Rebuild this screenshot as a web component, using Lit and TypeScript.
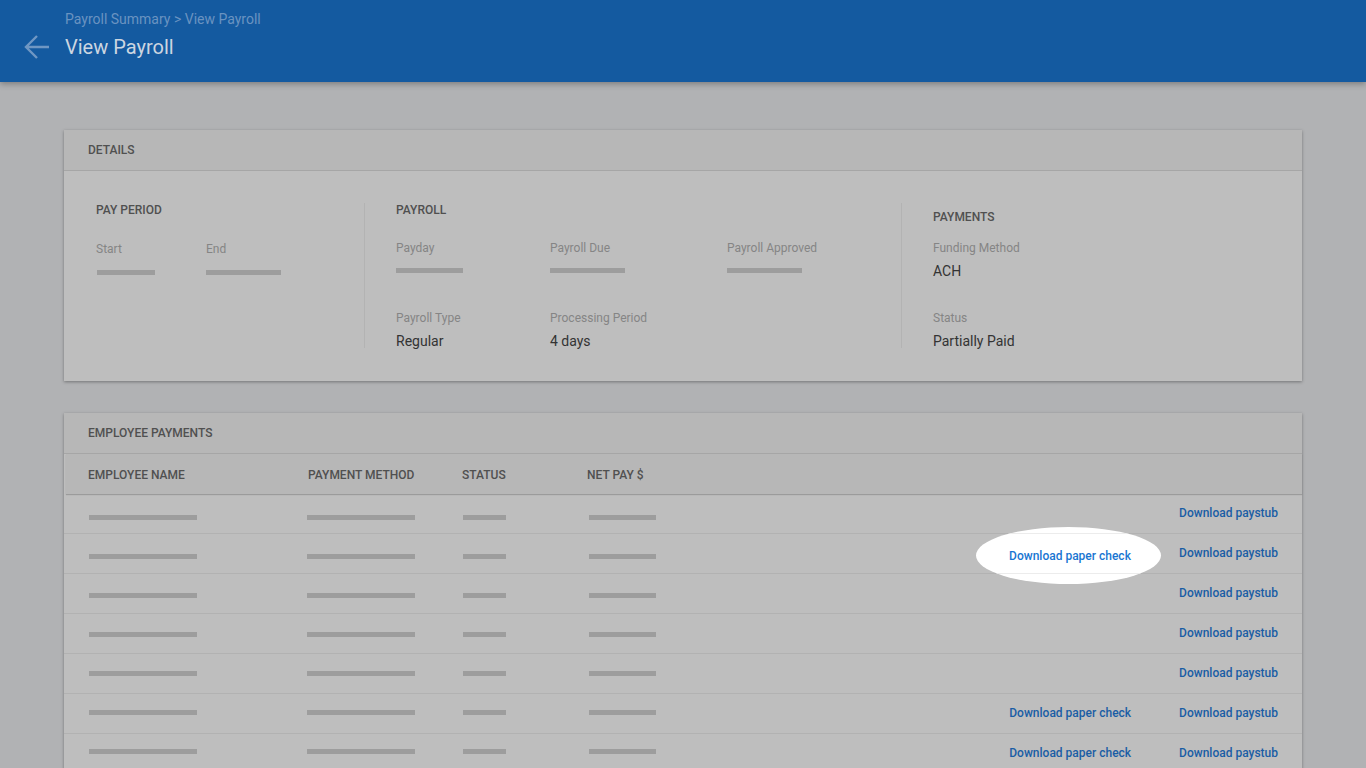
import { LitElement, html, css, nothing } from 'lit'
import { customElement } from 'lit/decorators.js'

const ROWS = [
  { paperCheck: false, spotlight: false },
  { paperCheck: false, spotlight: true },
  { paperCheck: false, spotlight: false },
  { paperCheck: false, spotlight: false },
  { paperCheck: false, spotlight: false },
  { paperCheck: true, spotlight: false },
  { paperCheck: true, spotlight: false },
]

const PAY_COLS = [
  { cls: 'c-name', bar: 108 },
  { cls: 'c-method', bar: 108 },
  { cls: 'c-status', bar: 43 },
  { cls: 'c-net', bar: 67 },
]

@customElement('app-root')
export class AppRoot extends LitElement {
  static styles = css`
    :host {
      display: block;
      height: 768px;
      overflow: hidden;
      background: #b1b2b4;
      font-family: Roboto, "Liberation Sans", sans-serif;
      font-size: 12px;
      color: #505050;
    }
    .topbar {
      height: 82px;
      box-sizing: border-box;
      background: #145aa0;
      box-shadow: 0 2px 6px rgba(0, 0, 0, 0.3);
      padding: 11px 0 0 24px;
      display: flex;
      position: relative;
    }
    .back {
      width: 26px;
      height: 26px;
      margin: 23px 15px 0 0;
      color: #6f97c3;
    }
    .crumb {
      font-size: 14px;
      line-height: 16px;
      color: #6a93c0;
    }
    h1 {
      margin: 8px 0 0;
      font-size: 20px;
      font-weight: 400;
      line-height: 24px;
      color: #ccd6e1;
    }
    main {
      padding: 48px 64px 0;
    }
    .card {
      background: #bebebe;
      box-shadow: 0 1px 3px rgba(0, 0, 0, 0.35);
      margin-bottom: 32px;
    }
    .card-title {
      height: 41px;
      box-sizing: border-box;
      padding: 0 24px;
      display: flex;
      align-items: center;
      background: #b7b7b7;
      border-bottom: 1px solid #a6a6a6;
      font-weight: 500;
      line-height: 14px;
    }
    .details {
      display: flex;
      height: 210px;
      box-sizing: border-box;
      padding: 32px 0 0 32px;
    }
    .section {
      height: 145px;
      box-sizing: border-box;
    }
    .s-period {
      width: 269px;
      border-right: 1px solid #b3b3b3;
    }
    .s-payroll {
      width: 537px;
      padding-left: 31px;
      border-right: 1px solid #b3b3b3;
    }
    .s-payments {
      padding-left: 31px;
    }
    h2 {
      margin: 0;
      font-size: 12px;
      font-weight: 500;
      line-height: 14px;
      color: #505050;
    }
    .s-payments h2 {
      margin-top: 7px;
    }
    .fields {
      display: flex;
      margin-top: 24px;
    }
    .s-period .fields {
      margin-top: 25px;
    }
    .s-payments .fields {
      margin-top: 17px;
    }
    .fields + .fields,
    .s-payments .fields + .fields {
      margin-top: 0;
    }
    .field {
      height: 70px;
    }
    .w-110 {
      width: 110px;
    }
    .w-154 {
      width: 154px;
    }
    .w-177 {
      width: 177px;
    }
    .label {
      line-height: 14px;
      color: #858585;
    }
    .value {
      margin-top: 8px;
      font-size: 14px;
      line-height: 16px;
      color: #333;
    }
    .bar {
      height: 5px;
      background: #9d9d9d;
    }
    .field .bar {
      margin-top: 13px;
    }
    .s-period .field .bar {
      margin-top: 14px;
    }
    .s-period .field:first-child .bar {
      margin-left: 1px;
    }
    .thead {
      height: 40px;
      box-sizing: border-box;
      margin-left: 2px;
      padding: 2px 0 0 22px;
      display: flex;
      align-items: center;
      background: #b7b7b7;
      box-shadow: 0 1px 1px rgba(0, 0, 0, 0.18);
      position: relative;
      font-weight: 500;
      line-height: 14px;
    }
    .thead .c-name {
      width: 220px;
    }
    .thead .c-method {
      width: 154px;
    }
    .thead .c-status {
      width: 125px;
    }
    .row {
      height: 40px;
      box-sizing: border-box;
      padding: 0 24px 0 25px;
      display: flex;
      border-bottom: 1px solid #b2b2b2;
      position: relative;
    }
    .row .c-name {
      width: 218px;
    }
    .row .c-method {
      width: 156px;
    }
    .row .c-status {
      width: 126px;
    }
    .row .c-net {
      width: 67px;
    }
    .links {
      flex: 1;
      display: flex;
      justify-content: flex-end;
      align-items: center;
      gap: 48px;
      height: 38px;
    }
    .link {
      font-weight: 500;
      color: #1a5da5;
      white-space: nowrap;
    }
    .spot {
      position: absolute;
      right: 141px;
      top: -7px;
      width: 185px;
      height: 57px;
      border-radius: 50%;
      overflow: hidden;
      background: #fff;
      display: flex;
      align-items: center;
      justify-content: center;
      z-index: 1;
    }
    .spot::before,
    .spot::after {
      content: '';
      position: absolute;
      left: 0;
      right: 0;
      height: 1px;
      background: #ececec;
    }
    .spot::before {
      top: 6px;
    }
    .spot::after {
      top: 46px;
    }
    .spot .link {
      color: #1976d2;
      margin: 1px 0 0 3px;
    }
  `

  private field(label: string, cls: string, value?: string, bar?: number) {
    return html`<div class="field ${cls}">
      <div class="label">${label}</div>
      ${bar
        ? html`<div class="bar" style="width:${bar}px"></div>`
        : html`<div class="value">${value}</div>`}
    </div>`
  }

  render() {
    return html`
      <header class="topbar">
        <svg class="back" viewBox="0 0 26 26" fill="none" stroke="currentColor" stroke-width="2.4">
          <path d="M25 13H2M13 2 2 13l11 11" />
        </svg>
        <div>
          <div class="crumb">Payroll Summary &gt; View Payroll</div>
          <h1>View Payroll</h1>
        </div>
      </header>
      <main>
        <section class="card">
          <div class="card-title">DETAILS</div>
          <div class="details">
            <div class="section s-period">
              <h2>PAY PERIOD</h2>
              <div class="fields">
                ${this.field('Start', 'w-110', undefined, 58)}
                ${this.field('End', 'w-110', undefined, 75)}
              </div>
            </div>
            <div class="section s-payroll">
              <h2>PAYROLL</h2>
              <div class="fields">
                ${this.field('Payday', 'w-154', undefined, 67)}
                ${this.field('Payroll Due', 'w-177', undefined, 75)}
                ${this.field('Payroll Approved', 'w-154', undefined, 75)}
              </div>
              <div class="fields">
                ${this.field('Payroll Type', 'w-154', 'Regular')}
                ${this.field('Processing Period', 'w-177', '4 days')}
              </div>
            </div>
            <div class="section s-payments">
              <h2>PAYMENTS</h2>
              <div class="fields">${this.field('Funding Method', '', 'ACH')}</div>
              <div class="fields">${this.field('Status', '', 'Partially Paid')}</div>
            </div>
          </div>
        </section>
        <section class="card">
          <div class="card-title">EMPLOYEE PAYMENTS</div>
          <div class="thead">
            <div class="c-name">EMPLOYEE NAME</div>
            <div class="c-method">PAYMENT METHOD</div>
            <div class="c-status">STATUS</div>
            <div class="c-net">NET PAY $</div>
          </div>
          ${ROWS.map(
            (r, i) => html`<div class="row">
              ${PAY_COLS.map(
                (c) => html`<div class=${c.cls}>
                  <div class="bar" style="width:${c.bar}px;margin-top:${21 - i}px"></div>
                </div>`
              )}
              <div class="links">
                ${r.paperCheck ? html`<span class="link">Download paper check</span>` : nothing}
                <span class="link">Download paystub</span>
              </div>
              ${r.spotlight
                ? html`<div class="spot"><span class="link">Download paper check</span></div>`
                : nothing}
            </div>`
          )}
        </section>
      </main>
    `
  }
}
